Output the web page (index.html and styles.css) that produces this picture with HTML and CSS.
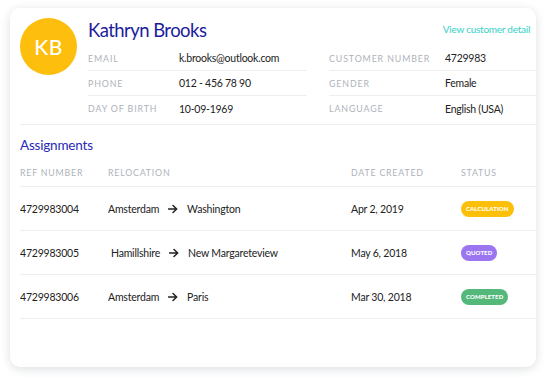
FILE: index.html
```html
<!DOCTYPE html>
<html>
<head>
<meta charset="utf-8">
<link rel="stylesheet" href="styles.css">
</head>
<body>
<div class="page">
  <div class="card">
    <div class="customer">
      <div class="avatar">KB</div>
      <div class="info">
        <div class="name-row">
          <h1 class="name">Kathryn Brooks</h1>
          <a class="detail-link">View customer detail</a>
        </div>
        <div class="fields">
          <div class="col col-left">
            <div class="field"><span class="label">Email</span><span class="value">k.brooks@outlook.com</span></div>
            <div class="field"><span class="label">Phone</span><span class="value">012 - 456 78 90</span></div>
            <div class="field"><span class="label">Day of birth</span><span class="value">10-09-1969</span></div>
          </div>
          <div class="col col-right">
            <div class="field"><span class="label">Customer number</span><span class="value">4729983</span></div>
            <div class="field"><span class="label">Gender</span><span class="value">Female</span></div>
            <div class="field"><span class="label">Language</span><span class="value">English (USA)</span></div>
          </div>
        </div>
      </div>
    </div>
    <div class="assignments">
      <h2 class="section-title">Assignments</h2>
      <div class="table">
        <div class="trow thead">
          <span class="c-ref">Ref number</span>
          <span class="c-rel">Relocation</span>
          <span class="c-date">Date created</span>
          <span class="c-status">Status</span>
        </div>
        <div class="trow">
          <span class="c-ref">4729983004</span>
          <span class="c-rel"><span>Amsterdam</span><svg class="arrow" viewBox="0 0 10 10"><path d="M0.5 5H8.5M5 1.5L8.7 5L5 8.5" fill="none" stroke="#222" stroke-width="1.5" stroke-linecap="round" stroke-linejoin="round"/></svg><span>Washington</span></span>
          <span class="c-date">Apr 2, 2019</span>
          <span class="c-status"><span class="badge badge-calc">Calculation</span></span>
        </div>
        <div class="trow">
          <span class="c-ref">4729983005</span>
          <span class="c-rel indent"><span>Hamillshire</span><svg class="arrow" viewBox="0 0 10 10"><path d="M0.5 5H8.5M5 1.5L8.7 5L5 8.5" fill="none" stroke="#222" stroke-width="1.5" stroke-linecap="round" stroke-linejoin="round"/></svg><span>New Margareteview</span></span>
          <span class="c-date">May 6, 2018</span>
          <span class="c-status"><span class="badge badge-quoted">Quoted</span></span>
        </div>
        <div class="trow">
          <span class="c-ref">4729983006</span>
          <span class="c-rel"><span>Amsterdam</span><svg class="arrow" viewBox="0 0 10 10"><path d="M0.5 5H8.5M5 1.5L8.7 5L5 8.5" fill="none" stroke="#222" stroke-width="1.5" stroke-linecap="round" stroke-linejoin="round"/></svg><span>Paris</span></span>
          <span class="c-date">Mar 30, 2018</span>
          <span class="c-status"><span class="badge badge-done">Completed</span></span>
        </div>
      </div>
    </div>
  </div>
</div>
</body>
</html>
```
FILE: styles.css
```css
* { box-sizing: border-box; }
html, body { margin: 0; padding: 0; background: #ffffff; }
body { font-family: Lato, "Open Sans", sans-serif; color: #222; }

.page { padding: 8px 10px 12px 10px; }

.card {
  width: 526px;
  height: 359px;
  background: #fff;
  border-radius: 10px;
  box-shadow: 0 2px 10px rgba(40, 50, 70, 0.16);
  padding: 10px 0 0 10px;
  overflow: hidden;
}

.customer {
  display: flex;
  gap: 11px;
  border-bottom: 1px solid #eceef1;
  padding-bottom: 3px;
}

.avatar {
  flex: none;
  width: 57px;
  height: 57px;
  border-radius: 50%;
  background: #fdbe0d;
  color: #fff;
  font-size: 21px;
  font-weight: 500;
  display: flex;
  align-items: center;
  justify-content: center;
  letter-spacing: 0.5px;
}

.info { flex: 1; }

.name-row {
  display: flex;
  justify-content: space-between;
  align-items: center;
  height: 24px;
  margin-bottom: 4px;
  padding-right: 6px;
}

.name {
  margin: 0;
  font-size: 18.5px;
  font-weight: 400;
  color: #1d1d9c;
  letter-spacing: -0.55px;
}

.detail-link {
  font-size: 10px;
  letter-spacing: -0.25px;
  color: #35d0c8;
  margin-top: -2px;
}

.fields { display: flex; gap: 22px; }
.col-left { width: 219px; }
.col-right { flex: 1; }

.field {
  display: flex;
  align-items: center;
  height: 25px;
  border-bottom: 1px solid #eceef1;
}
.field:last-child { border-bottom: none; }

.label {
  text-transform: uppercase;
  font-size: 8.8px;
  letter-spacing: 0.9px;
  color: #aeb2ba;
}
.col-left .label { width: 91px; }
.col-right .label { width: 116px; }

.value { font-size: 10.5px; letter-spacing: -0.25px; color: #222; }

.assignments { padding-top: 12px; }

.section-title {
  margin: 0 0 8px 0;
  font-size: 13.5px;
  font-weight: 400;
  color: #2a2ab6;
  line-height: 16px;
  letter-spacing: -0.2px;
}

.trow {
  display: flex;
  align-items: center;
  height: 44px;
  border-bottom: 1px solid #eceef1;
  font-size: 10.5px;
  letter-spacing: -0.2px;
}
.trow.thead {
  height: 26px;
  align-items: center;
  text-transform: uppercase;
  font-size: 8.8px;
  letter-spacing: 0.8px;
  color: #aeb2ba;
  padding-bottom: 2px;
}

.c-ref { width: 88px; }
.c-rel { width: 243px; display: flex; align-items: center; gap: 9px; }
.c-rel.indent { padding-left: 3px; }
.c-date { width: 110px; }
.c-status { flex: 1; }

.arrow { width: 10px; height: 10px; }

.badge {
  display: inline-block;
  height: 16px;
  line-height: 16px;
  padding: 0 5px;
  border-radius: 8px;
  color: #fff;
  font-size: 6px;
  font-weight: 900;
  text-transform: uppercase;
  letter-spacing: 0.1px;
}
.badge-calc { background: #fcbf0a; }
.badge-quoted { background: #9c76f0; }
.badge-done { background: #55b87b; }
```
